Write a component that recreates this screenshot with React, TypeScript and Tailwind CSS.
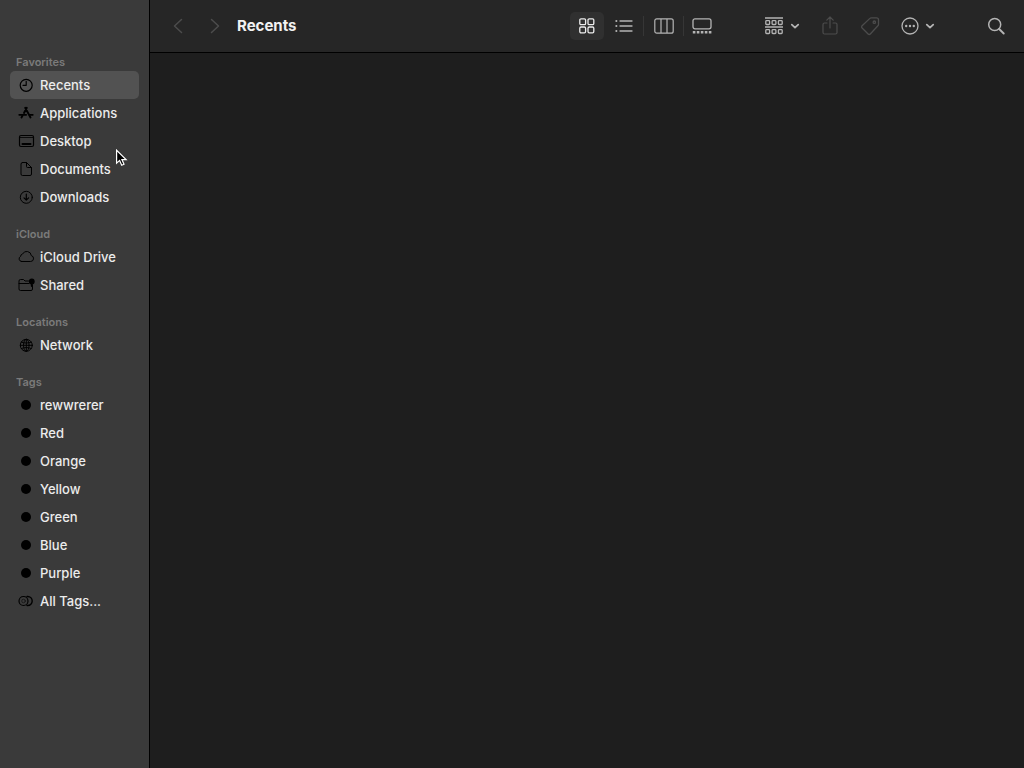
import React, { useState } from "react";

type IconName =
  | "clock"
  | "apps"
  | "desktop"
  | "document"
  | "download"
  | "cloud"
  | "shared"
  | "network"
  | "dot"
  | "allTags";

type Item = { id: string; label: string; icon: IconName };
type Section = { title: string; items: Item[] };

const SECTIONS: Section[] = [
  {
    title: "Favorites",
    items: [
      { id: "recents", label: "Recents", icon: "clock" },
      { id: "applications", label: "Applications", icon: "apps" },
      { id: "desktop", label: "Desktop", icon: "desktop" },
      { id: "documents", label: "Documents", icon: "document" },
      { id: "downloads", label: "Downloads", icon: "download" },
    ],
  },
  {
    title: "iCloud",
    items: [
      { id: "icloud-drive", label: "iCloud Drive", icon: "cloud" },
      { id: "shared", label: "Shared", icon: "shared" },
    ],
  },
  {
    title: "Locations",
    items: [{ id: "network", label: "Network", icon: "network" }],
  },
  {
    title: "Tags",
    items: [
      { id: "tag-rewwrerer", label: "rewwrerer", icon: "dot" },
      { id: "tag-red", label: "Red", icon: "dot" },
      { id: "tag-orange", label: "Orange", icon: "dot" },
      { id: "tag-yellow", label: "Yellow", icon: "dot" },
      { id: "tag-green", label: "Green", icon: "dot" },
      { id: "tag-blue", label: "Blue", icon: "dot" },
      { id: "tag-purple", label: "Purple", icon: "dot" },
      { id: "all-tags", label: "All Tags...", icon: "allTags" },
    ],
  },
];

// Sidebar glyphs, all on a 20x16 box
const GLYPHS: Record<IconName, React.ReactNode> = {
  clock: (
    <>
      <circle cx="10.2" cy="8.3" r="6" strokeWidth="1.2" />
      <path d="M10.2 4.3v4H7" strokeWidth="1.2" />
    </>
  ),
  apps: (
    <>
      <path d="M9.2 2.8l5.300 9.700M10.800 2.800L8 8M6.600 10.600L5.500 12.500" strokeWidth="1.9" />
      <path d="M3.200 9.800h7M13.500 9.800h3.300" strokeWidth="1.7" />
    </>
  ),
  desktop: (
    <>
      <rect x="3.5" y="2.5" width="14" height="11" rx="1.5" strokeWidth="1.2" />
      <path d="M3.5 4.500h14" strokeWidth="0.8" />
      <path d="M6.500 11h8" strokeWidth="2" />
    </>
  ),
  document: (
    <>
      <path d="M6.5 1.5h4l5 5V13a1.5 1.5 0 0 1-1.5 1.5H6.5A1.5 1.5 0 0 1 5 13V3a1.5 1.5 0 0 1 1.5-1.5z" />
      <path d="M10.5 1.5v4a1 1 0 0 0 1 1h4" />
    </>
  ),
  download: (
    <>
      <circle cx="10.3" cy="8.3" r="6" />
      <path d="M10.3 5v6M8 8.900l2.300 2.300 2.300-2.300" strokeWidth="1.2" />
    </>
  ),
  cloud: (
    <path d="M5.500 12.500h9a3 3 0 0 0 .8-5.900 4.600 4.600 0 0 0-8.700-1.600 2.500 2.500 0 0 0-2 2.400 2.700 2.700 0 0 0 .9 5.100z" />
  ),
  shared: (
    <>
      <path d="M12.5 4H9L7.500 2.500h-3A1.500 1.500 0 0 0 3 4v8a1.500 1.500 0 0 0 1.500 1.500H15a1.500 1.500 0 0 0 1.500-1.500V8.500M3 6.500h10" />
      <circle cx="15.8" cy="4.5" r="2.900" fill="currentColor" stroke="none" />
      <path d="M15.8 5v4" strokeWidth="2" />
    </>
  ),
  network: (
    <>
      <circle cx="10.3" cy="8.3" r="6" />
      <ellipse cx="10.3" cy="8.3" rx="2.8" ry="6" />
      <path d="M4.3 8.3h12M10.3 2.300v12M5.300 5.100c3 1.300 7 1.300 10 0M5.300 11.500c3-1.300 7-1.300 10 0" />
    </>
  ),
  dot: <circle cx="10" cy="8" r="5" fill="currentColor" stroke="none" />,
  allTags: (
    <>
      <circle cx="7.5" cy="8" r="4.500" strokeWidth="1.2" />
      <circle cx="7.5" cy="8" r="1.800" strokeWidth="0.5" />
      <path d="M11 3.500h.7a4.500 4.500 0 0 1 0 9H11" strokeWidth="1.4" />
    </>
  ),
};

function Glyph({ name }: { name: IconName }) {
  return (
    <svg
      viewBox="0 0 20 16"
      className="h-4 w-5 shrink-0 text-black"
      fill="none"
      stroke="currentColor"
      strokeWidth="1"
      strokeLinecap="round"
      strokeLinejoin="round"
      aria-hidden="true"
    >
      {GLYPHS[name]}
    </svg>
  );
}

function Chevron() {
  return (
    <svg viewBox="0 0 10 8" className="h-2 w-[10px]" fill="none" stroke="currentColor" strokeWidth="1.8" strokeLinecap="round" strokeLinejoin="round">
      <path d="M1.800 2.600L5 5.600l3.200-3" />
    </svg>
  );
}

function ToolButton({
  label,
  className,
  children,
  disabled,
}: {
  label: string;
  className: string;
  children: React.ReactNode;
  disabled?: boolean;
}) {
  return (
    <button
      type="button"
      aria-label={label}
      disabled={disabled}
      className={`flex h-7 shrink-0 items-center justify-center ${className}`}
    >
      {children}
    </button>
  );
}

function Sidebar({ selected, onSelect }: { selected: string; onSelect: (id: string) => void }) {
  return (
    <nav className="flex w-[150px] shrink-0 flex-col gap-[14px] border-r border-black bg-[#3a3a3a] px-[10px] pt-[53px] pb-6">
      {SECTIONS.map((s) => (
        <section key={s.title}>
          <h2 className="px-[6px] text-[11px] leading-[18px] font-semibold text-[#7b7b7b]">{s.title}</h2>
          <ul>
            {s.items.map((it) => (
              <li key={it.id}>
                <a
                  href={`#${it.id}`}
                  onClick={() => onSelect(it.id)}
                  className={`flex h-7 items-center gap-1 rounded-[5px] px-[6px] text-[13px] leading-5 font-medium whitespace-nowrap text-[#ececec] ${
                    selected === it.id ? "bg-[#525252]" : ""
                  }`}
                >
                  <Glyph name={it.icon} />
                  {it.label}
                </a>
              </li>
            ))}
          </ul>
        </section>
      ))}
    </nav>
  );
}

function Toolbar({ title }: { title: string }) {
  return (
    <header className="flex h-[53px] items-center border-b border-black bg-[#262626] pr-3 pl-[9px] text-[#b4b4b4]">
      <ToolButton label="Back" className="w-[37px] text-[#4c4c4c]" disabled>
        <svg viewBox="0 0 10 16" className="h-4 w-[10px]" fill="none" stroke="currentColor" strokeWidth="1.5" strokeLinecap="round" strokeLinejoin="round">
          <path d="M8.500 1.500L1.500 8l7 6.500" />
        </svg>
      </ToolButton>
      <ToolButton label="Forward" className="w-[37px] text-[#4c4c4c]" disabled>
        <svg viewBox="0 0 10 16" className="h-4 w-[10px]" fill="none" stroke="currentColor" strokeWidth="1.5" strokeLinecap="round" strokeLinejoin="round">
          <path d="M1.500 1.500L8.500 8l-7 6.500" />
        </svg>
      </ToolButton>
      <h1 className="ml-1 text-[15px] font-bold text-[#f2f2f2]">{title}</h1>

      <div className="mr-[42px] ml-auto flex items-center">
        <ToolButton label="Icon view" className="w-[34px] rounded-[5px] bg-[#303030] text-[#ececec]">
          <svg viewBox="0 0 16 16" className="size-4" fill="none" stroke="currentColor" strokeWidth="1.3">
            <rect x="0.8" y="0.8" width="5.8" height="5.8" rx="1.2" />
            <rect x="9" y="0.8" width="5.8" height="5.8" rx="1.2" />
            <rect x="0.8" y="9" width="5.8" height="5.8" rx="1.2" />
            <rect x="9" y="9" width="5.8" height="5.8" rx="1.2" />
          </svg>
        </ToolButton>
        <ToolButton label="List view" className="w-[39px]">
          <svg viewBox="0 0 18 14" className="h-[14px] w-[18px]" fill="none" stroke="currentColor" strokeWidth="1.3" strokeLinecap="round">
            <path d="M5 2h12M5 7h12M5 12h12" />
            <path d="M1.300 2h.1M1.300 7h.1M1.300 12h.1" strokeWidth="2" />
          </svg>
        </ToolButton>
        <div className="h-5 w-px bg-[#363636]" />
        <ToolButton label="Column view" className="w-[39px]">
          <svg viewBox="0 0 20 16" className="h-4 w-5" fill="none" stroke="currentColor" strokeWidth="1.2">
            <rect x="0.8" y="0.8" width="18.4" height="14.4" rx="2" />
            <path d="M7 1v14M13 1v14" />
          </svg>
        </ToolButton>
        <div className="h-5 w-px bg-[#363636]" />
        <ToolButton label="Gallery view" className="w-9">
          <svg viewBox="0 0 20 16" className="h-4 w-5" fill="none" stroke="currentColor" strokeWidth="1.3">
            <rect x="1" y="0.8" width="18" height="10" rx="2" />
            <path d="M0.800 14.300h18.600" strokeWidth="2.4" strokeDasharray="2.6 1.4" />
          </svg>
        </ToolButton>
      </div>

      <ToolButton label="Group items" className="w-10 gap-[6px]">
        <svg viewBox="0 0 20 18" className="h-[18px] w-5" fill="none" stroke="currentColor" strokeWidth="1.3">
          <path d="M1 1h18M1 10h18" />
          <rect x="1.8" y="3.7" width="3.8" height="3.8" rx="0.8" />
          <rect x="8.1" y="3.7" width="3.8" height="3.8" rx="0.8" />
          <rect x="14.4" y="3.7" width="3.8" height="3.8" rx="0.8" />
          <rect x="1.8" y="12.7" width="3.8" height="3.8" rx="0.8" />
          <rect x="8.1" y="12.7" width="3.8" height="3.8" rx="0.8" />
          <rect x="14.4" y="12.7" width="3.8" height="3.8" rx="0.8" />
        </svg>
        <Chevron />
      </ToolButton>
      <ToolButton label="Share" className="ml-2 w-10 text-[#4c4c4c]" disabled>
        <svg viewBox="0 0 16 20" className="h-5 w-4" fill="none" stroke="currentColor" strokeWidth="1.2" strokeLinecap="round" strokeLinejoin="round">
          <path d="M5 7H2.500A1.500 1.500 0 0 0 1 8.500v8A1.500 1.500 0 0 0 2.500 18h11a1.500 1.500 0 0 0 1.500-1.500v-8A1.500 1.500 0 0 0 13.500 7H11" />
          <path d="M8 12V1M4.800 4.200L8 1l3.200 3.200" />
        </svg>
      </ToolButton>
      <ToolButton label="Edit tags" className="w-10 text-[#4c4c4c]" disabled>
        <svg viewBox="0 0 20 20" className="size-5" fill="none" stroke="currentColor" strokeWidth="1.3" strokeLinejoin="round">
          <path d="M11.300 1.800h5.200a2 2 0 0 1 2 2v4.600a2 2 0 0 1-.6 1.400l-7.600 8.200a1.500 1.500 0 0 1-2.200 0l-6-6a1.500 1.500 0 0 1 0-2.200l7.800-7.400a2 2 0 0 1 1.400-.6z" />
          <circle cx="14.3" cy="6.2" r="1.2" />
        </svg>
      </ToolButton>
      <ToolButton label="More actions" className="ml-2 w-10 gap-[6px]">
        <svg viewBox="0 0 18 18" className="size-[18px]" fill="none" stroke="currentColor" strokeWidth="1.3">
          <circle cx="9" cy="9" r="8" />
          <g fill="currentColor" stroke="none">
            <circle cx="5.2" cy="9" r="1.2" />
            <circle cx="9" cy="9" r="1.2" />
            <circle cx="12.8" cy="9" r="1.2" />
          </g>
        </svg>
        <Chevron />
      </ToolButton>
      <ToolButton label="Search" className="ml-[42px] w-8">
        <svg viewBox="0 0 18 18" className="size-[18px]" fill="none" stroke="currentColor" strokeWidth="1.5" strokeLinecap="round">
          <circle cx="7.7" cy="7.5" r="6" />
          <path d="M12.200 12l4.500 4.500" strokeWidth="1.9" />
        </svg>
      </ToolButton>
    </header>
  );
}

export default function App() {
  const [selected, setSelected] = useState("recents");

  const current = SECTIONS.flatMap((s) => s.items).find((it) => it.id === selected);

  return (
    <div className="flex min-h-screen bg-[#1e1e1e] font-['Inter','Liberation_Sans',sans-serif]">
      <Sidebar selected={selected} onSelect={setSelected} />
      <div className="flex min-w-0 flex-1 flex-col">
        <Toolbar title={current?.label ?? ""} />
        <main className="flex-1" />
      </div>

      {/* mouse pointer */}
      <svg
        viewBox="0 0 12 18"
        className="pointer-events-none absolute top-[149px] left-[116px] h-[18px] w-3"
        fill="black"
        stroke="white"
        strokeWidth="1.2"
        aria-hidden="true"
      >
        <path d="M.6 1.200v13l3-2.800 2.100 4.900 2.300-1-2.100-4.700h4.200z" />
      </svg>
    </div>
  );
}
